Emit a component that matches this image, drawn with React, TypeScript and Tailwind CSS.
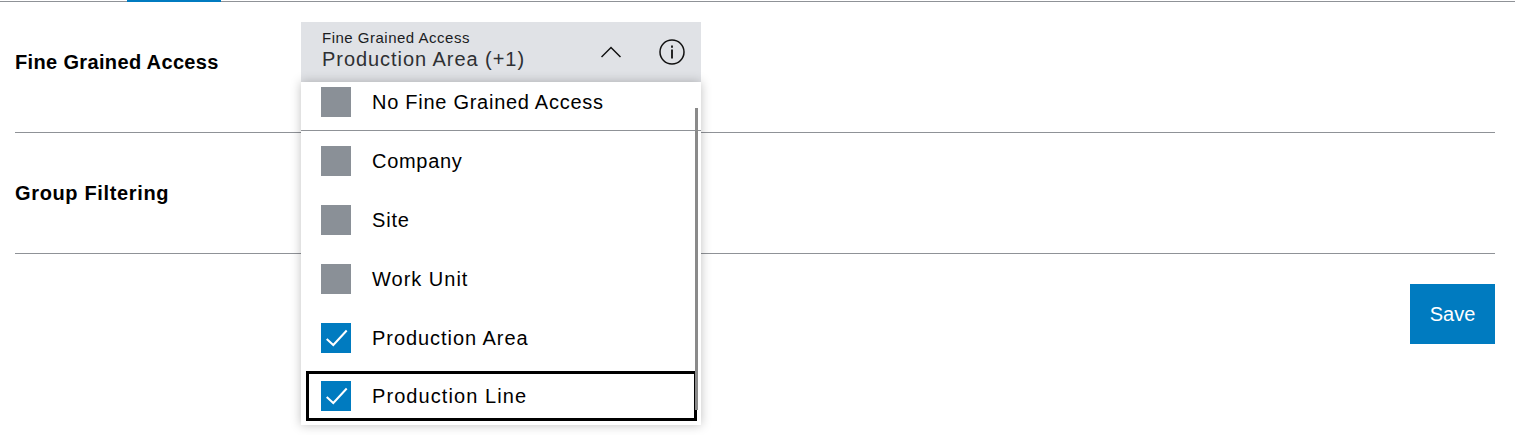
import React from 'react';

const options = [
  { label: 'Company', checked: false, tracking: 'tracking-[0.7px]' },
  { label: 'Site', checked: false, tracking: 'tracking-[0.8px]' },
  { label: 'Work Unit', checked: false, tracking: 'tracking-[1px]' },
  { label: 'Production Area', checked: true, tracking: 'tracking-[0.95px]' },
];

const Checkbox = ({ checked }: { checked: boolean }) => (
  <span className={checked ? 'flex h-[30px] w-[30px] shrink-0 items-center justify-center bg-[#007bc0]' : 'flex h-[30px] w-[30px] shrink-0 bg-[#8a9097]'}>
    {checked && (
      <svg width="30" height="30" viewBox="0 0 30 30" fill="none" stroke="#ffffff" strokeWidth="2">
        <path d="M5.7 16l6.6 6L25.7 7.5" />
      </svg>
    )}
  </span>
);

const App: React.FC = () => {
  return (
    <div className="h-[435px] w-[1515px] overflow-hidden bg-white font-['Liberation_Sans',sans-serif] text-black">
      <div className="relative h-[2px] border-b border-[#8f9297]">
        <div className="absolute left-[127px] top-0 h-[2px] w-[94px] bg-[#007bc0]" />
      </div>

      <div className="pl-[15px] pr-[20px]">
        <div className="flex h-[131px] items-start border-b border-[#8f9297] pt-[20px]">
          <div className="flex h-[80px] w-[286px] items-center text-[20px] font-bold tracking-[0.35px]">Fine Grained Access</div>
          <div className="relative z-10 w-[400px]">
            <div className="flex h-[60px] items-center bg-[#e0e2e6] pl-[21px]">
              <div className="flex-1 -translate-y-[1px]">
                <div className="text-[15px] leading-[16px] tracking-[0.5px] text-[#1a1c1f]">Fine Grained Access</div>
                <div className="text-[20px] leading-[26px] tracking-[0.95px] text-[#2e3033]">Production Area (+1)</div>
              </div>
              <svg width="20" height="12" viewBox="0 0 20 12" fill="none" stroke="#111111" strokeWidth="1.5" className="mr-[38px] shrink-0">
                <path d="M0.5 11L10 1.5l9.5 9.5" />
              </svg>
              <svg width="26" height="26" viewBox="0 0 26 26" fill="none" stroke="#111111" strokeWidth="1.5" className="mr-[16px] shrink-0">
                <circle cx="13" cy="13" r="12" />
                <path d="M13 10.5v9M13 6.5v2.2" strokeWidth="1.8" />
              </svg>
            </div>

            <div className="absolute left-0 top-full h-[343px] w-[400px] bg-white shadow-[0_0_10px_rgba(0,0,0,0.25)]">
              <div className="flex h-[49px] items-start gap-[21px] border-b border-[#8f9297] pl-[20px] pt-[5px]">
                <Checkbox checked={false} />
                <span className="text-[20px] leading-[30px] tracking-[0.73px]">No Fine Grained Access</span>
              </div>
              {options.map((o) => (
                <div key={o.label} className="flex h-[59px] items-center gap-[21px] pl-[20px]">
                  <Checkbox checked={o.checked} />
                  <span className={`text-[20px] ${o.tracking}`}>{o.label}</span>
                </div>
              ))}
              <div className="ml-[5px] mt-[4px] flex h-[50px] w-[391px] items-center gap-[21px] border-[3px] border-black pl-[12px]">
                <Checkbox checked />
                <span className="text-[20px] tracking-[1.08px]">Production Line</span>
              </div>
              <div className="absolute left-[394px] top-[26px] h-[302px] w-[3px] bg-[#8a8a8a]" />
            </div>
          </div>
        </div>

        <div className="flex h-[121px] items-center border-b border-[#8f9297] text-[20px] font-bold tracking-[0.65px]">Group Filtering</div>

        <div className="flex justify-end pt-[30px]">
          <button className="h-[60px] w-[85px] bg-[#007bc0] text-[20px] text-white">Save</button>
        </div>
      </div>
    </div>
  );
};

export default App;
